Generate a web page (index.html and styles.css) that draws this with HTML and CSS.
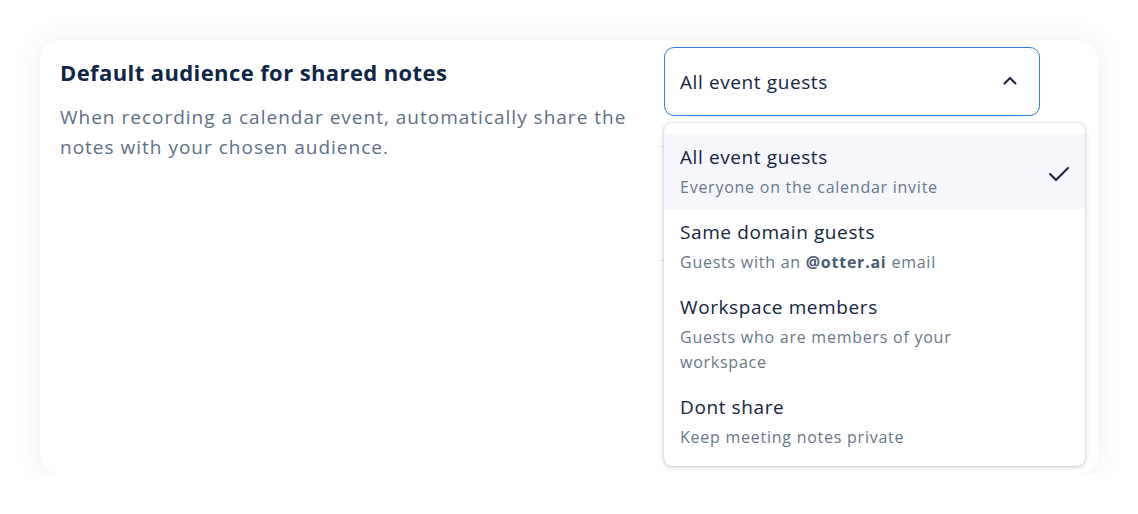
FILE: index.html
```html
<!DOCTYPE html>
<html>
<head>
<meta charset="utf-8">
<link rel="stylesheet" href="styles.css">
</head>
<body>
<div class="card">
  <div class="info">
    <h2 class="title">Default audience for shared notes</h2>
    <p class="desc">When recording a calendar event, automatically share the notes with your chosen audience.</p>
  </div>
  <div class="control">
    <div class="select">
      <span class="select-value">All event guests</span>
      <svg class="chev" width="14" height="9" viewBox="0 0 14 9"><path d="M1.5 7.5 L7 2 L12.5 7.5" fill="none" stroke="#14243d" stroke-width="2" stroke-linecap="round" stroke-linejoin="round"/></svg>
    </div>
    <div class="behind">
      <div class="behind-row"></div>
      <div class="behind-row"></div>
    </div>
    <div class="menu">
      <div class="item selected">
        <div class="item-text">
          <div class="item-title">All event guests</div>
          <div class="item-sub">Everyone on the calendar invite</div>
        </div>
        <svg class="check" width="22" height="16" viewBox="0 0 22 16"><path d="M2 8 L8 14 L20 2" fill="none" stroke="#14243d" stroke-width="2" stroke-linecap="round" stroke-linejoin="round"/></svg>
      </div>
      <div class="item">
        <div class="item-text">
          <div class="item-title">Same domain guests</div>
          <div class="item-sub">Guests with an <b>@otter.ai</b> email</div>
        </div>
      </div>
      <div class="item">
        <div class="item-text">
          <div class="item-title">Workspace members</div>
          <div class="item-sub narrow">Guests who are members of your workspace</div>
        </div>
      </div>
      <div class="item">
        <div class="item-text">
          <div class="item-title">Dont share</div>
          <div class="item-sub">Keep meeting notes private</div>
        </div>
      </div>
    </div>
  </div>
</div>
</body>
</html>
```
FILE: styles.css
```css
* { box-sizing: border-box; }
body {
  margin: 0;
  background: #ffffff;
  font-family: "Open Sans", "Noto Sans", sans-serif;
}
.card {
  margin: 40px 40px 0 40px;
  height: 434px;
  background: #fff;
  border-radius: 20px;
  box-shadow: 0 0 28px rgba(0, 0, 0, 0.07);
  display: flex;
  padding: 7px 58px 0 20px;
}
.info {
  flex: 1;
  padding-top: 11px;
}
.title {
  margin: 0;
  font-size: 22px;
  line-height: 28px;
  font-weight: 700;
  color: #0f2646;
  letter-spacing: 0.4px;
}
.desc {
  margin: 16px 0 0 0;
  font-size: 19px;
  line-height: 30px;
  color: #5d6f86;
  max-width: 585px;
  letter-spacing: 1px;
}
.control {
  width: 376px;
  position: relative;
}
.select {
  height: 69px;
  border: 1px solid #2f7de1;
  border-radius: 10px;
  display: flex;
  align-items: center;
  justify-content: space-between;
  padding: 0 22px 0 15px;
  font-size: 19px;
  color: #14243d;
  letter-spacing: 0.6px;
}
.chev { display: block; margin-top: -2px; }
.behind { margin-left: -6px; }
.behind-row {
  height: 114px;
  border-top: 1px solid #e6e8ec;
}
.behind-row:first-child { margin-top: 30px; }
.menu {
  position: absolute;
  top: 76px;
  left: 0;
  width: 421px;
  height: 343px;
  background: #fff;
  border-radius: 8px;
  box-shadow: 0 1px 5px rgba(0, 0, 0, 0.22), 0 0 1px rgba(0, 0, 0, 0.2);
  padding-top: 11px;
}
.item {
  display: flex;
  align-items: center;
  justify-content: space-between;
  padding: 11px 15px 9px 16px;
}
.item.selected { background: #f5f7fc; }
.item-title {
  font-size: 19px;
  line-height: 24px;
  color: #14243d;
  letter-spacing: 0.6px;
}
.item-sub {
  margin-top: 6px;
  font-size: 16px;
  line-height: 25px;
  color: #687789;
  letter-spacing: 0.75px;
}
.item-sub b { color: #4b5a6e; font-weight: 700; }
.item-sub.narrow { max-width: 300px; }
.check { display: block; margin-top: 2px; }
```
